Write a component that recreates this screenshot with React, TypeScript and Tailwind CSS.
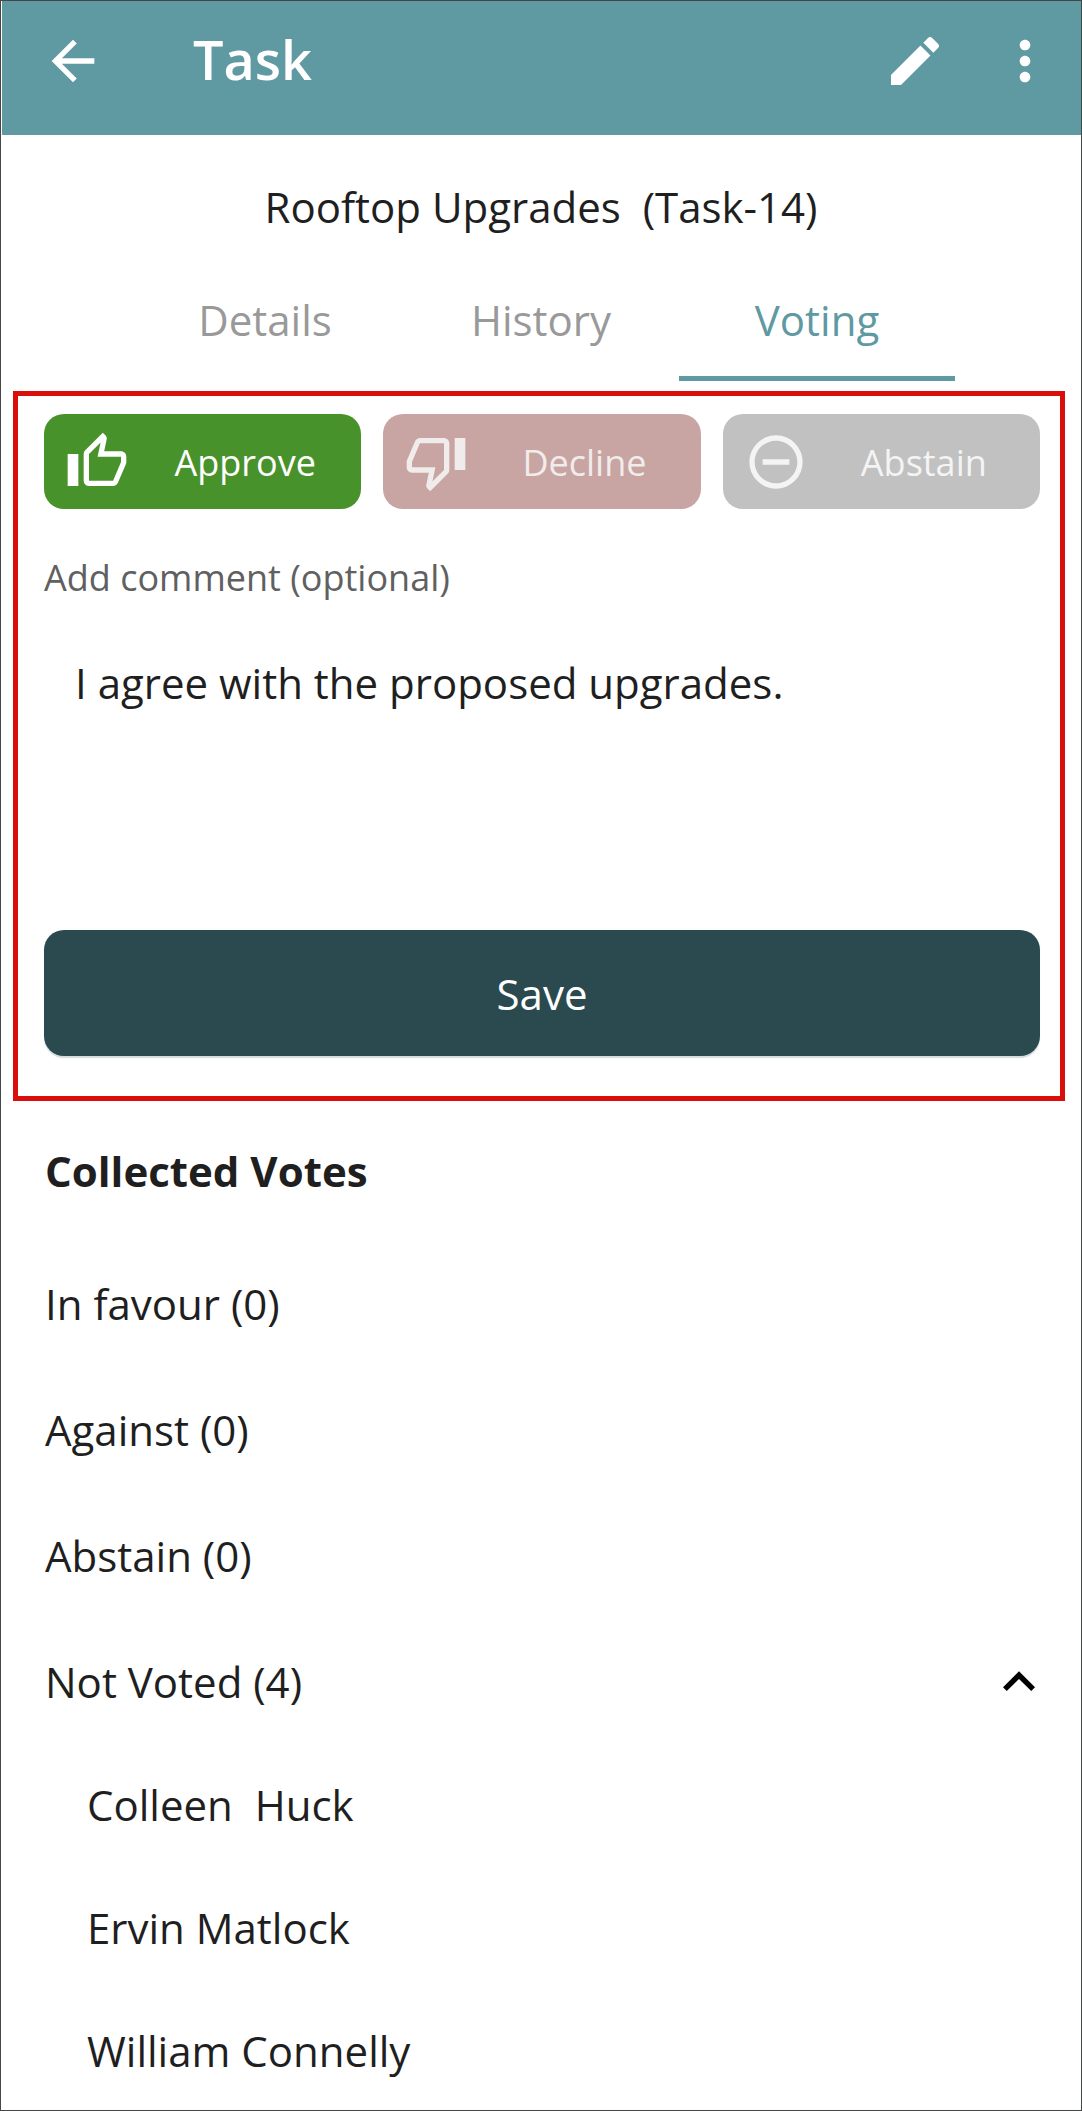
import { useState } from 'react';

const ICONS = {
  back: 'M20 11H7.83l5.59-5.59L12 4l-8 8 8 8 1.41-1.41L7.83 13H20v-2z',
  edit: 'M3 17.25V21h3.75L17.81 9.94l-3.75-3.75L3 17.25zM20.71 7.04c.39-.39.39-1.02 0-1.41l-2.34-2.34c-.39-.39-1.02-.39-1.41 0l-1.83 1.83 3.75 3.75 1.83-1.83z',
  more: 'M12 8c1.1 0 2-.9 2-2s-.9-2-2-2-2 .9-2 2 .9 2 2 2zm0 2c-1.1 0-2 .9-2 2s.9 2 2 2 2-.9 2-2-.9-2-2-2zm0 6c-1.1 0-2 .9-2 2s.9 2 2 2 2-.9 2-2-.9-2-2-2z',
  up: 'M5,9V21H1V9H5M9,21A2,2 0 0,1 7,19V9C7,8.45 7.22,7.95 7.59,7.59L14.17,1L15.23,2.06C15.5,2.33 15.67,2.7 15.67,3.11L15.64,3.43L14.69,8H21C22.11,8 23,8.9 23,10V12C23,12.26 22.95,12.5 22.86,12.73L19.84,19.78C19.54,20.5 18.83,21 18,21H9M9,19H18.03L21,12V10H12.21L13.34,4.68L9,9.03V19Z',
  down: 'M19,15V3H23V15H19M15,3A2,2 0 0,1 17,5V15C17,15.55 16.78,16.05 16.41,16.41L9.83,23L8.77,21.94C8.5,21.67 8.33,21.3 8.33,20.88L8.36,20.57L9.31,16H3C1.89,16 1,15.1 1,14V12C1,11.74 1.05,11.5 1.14,11.27L4.16,4.22C4.46,3.5 5.17,3 6,3H15M15,5H5.97L3,12V14H11.78L10.65,19.32L15,14.97V5Z',
  minus: 'M12,20C7.59,20 4,16.41 4,12C4,7.59 7.59,4 12,4C16.41,4 20,7.59 20,12C20,16.41 16.41,20 12,20M12,2A10,10 0 0,0 2,12A10,10 0 0,0 12,22A10,10 0 0,0 22,12A10,10 0 0,0 12,2M7,13H17V11H7',
  collapse: 'M12 8l-6 6 1.41 1.41L12 10.83l4.59 4.58L18 14z',
};

function Icon({ name }: { name: keyof typeof ICONS }) {
  return (
    <svg viewBox="0 0 24 24" className="size-16 shrink-0 fill-current" aria-hidden="true">
      <path d={ICONS[name]} />
    </svg>
  );
}

const TABS = ['Details', 'History', 'Voting'];

const CHOICES: { label: string; icon: keyof typeof ICONS; style: string }[] = [
  { label: 'Approve', icon: 'up', style: 'bg-[#48922b] text-white' },
  { label: 'Decline', icon: 'down', style: 'bg-[#c8a4a2] text-[#f0ecec]' },
  { label: 'Abstain', icon: 'minus', style: 'bg-[#c1c1c1] text-[#f4f4f4]' },
];

const TALLIES = ['In favour (0)', 'Against (0)', 'Abstain (0)'];
const NOT_VOTED = ['Colleen  Huck', 'Ervin Matlock', 'William Connelly'];

export default function App() {
  const [comment, setComment] = useState('I agree with the proposed upgrades.');
  const [open, setOpen] = useState(true);

  return (
    <div className="min-h-screen border border-[#444648] bg-white font-['Open_Sans',sans-serif] text-[42px] leading-[60px] text-[#1f1f1f]">
      <header className="ml-px flex items-start bg-[#5f99a2] pt-7 pr-6 pb-[42px] pl-[39px] text-white">
        <button type="button" aria-label="Back">
          <Icon name="back" />
        </button>
        <h1 className="ml-[88px] flex-1 text-[54px] leading-[60px] font-semibold">Task</h1>
        <div className="flex gap-[46px]">
          <button type="button" aria-label="Edit">
            <Icon name="edit" />
          </button>
          <button type="button" aria-label="More options">
            <Icon name="more" />
          </button>
        </div>
      </header>

      <h2 className="py-[42px] text-center font-medium whitespace-pre">Rooftop Upgrades  (Task-14)</h2>

      <nav className="mx-auto grid max-w-[828px] grid-cols-3" role="tablist">
        {TABS.map((tab) => (
          <button
            key={tab}
            type="button"
            role="tab"
            aria-selected={tab === 'Voting'}
            className={`border-b-[5px] pt-[11px] pb-[26px] font-medium ${
              tab === 'Voting' ? 'border-[#5f99a2] text-[#5f99a2]' : 'border-transparent text-[#999999]'
            }`}
          >
            {tab}
          </button>
        ))}
      </nav>

      <form
        className="mt-[10px] mr-4 ml-3 flex flex-col border-[5px] border-[#da0f0b] pt-[18px] pr-5 pb-10 pl-[26px]"
        onSubmit={(e) => e.preventDefault()}
      >
        <div className="grid grid-cols-3 gap-[22px]">
          {CHOICES.map(({ label, icon, style }) => (
            <button
              key={label}
              type="button"
              className={`flex h-[95px] items-center rounded-[20px] pl-[21px] text-[36px] ${style}`}
            >
              <Icon name={icon} />
              <span className="flex-1 pt-[3px] text-center">{label}</span>
            </button>
          ))}
        </div>

        <label htmlFor="comment" className="mt-11 text-[36px] leading-[50px] text-[#606060]">
          Add comment (optional)
        </label>
        <textarea
          id="comment"
          value={comment}
          onChange={(e) => setComment(e.target.value)}
          className="h-[327px] w-full resize-none pt-[50px] pl-[31px] outline-none"
        />

        <button
          type="submit"
          className="h-[126px] rounded-[20px] bg-[#2b4a4f] pt-[2px] text-white shadow-[0_2px_1px_rgba(43,74,79,0.2)]"
        >
          Save
        </button>
      </form>

      <section className="pr-[30px] pl-11">
        <h3 className="py-10 font-bold">Collected Votes</h3>
        {TALLIES.map((tally) => (
          <p key={tally} className="py-[33px]">
            {tally}
          </p>
        ))}
        <button
          type="button"
          aria-expanded={open}
          onClick={() => setOpen(!open)}
          className="flex h-[126px] w-full items-center justify-between text-left"
        >
          Not Voted (4)
          <span className={open ? 'text-black' : 'rotate-180 text-black'}>
            <Icon name="collapse" />
          </span>
        </button>
        {open && (
          <ul className="flex flex-col gap-[63px] pt-[30px] pb-6 pl-[42px]">
            {NOT_VOTED.map((name) => (
              <li key={name} className="whitespace-pre">
                {name}
              </li>
            ))}
          </ul>
        )}
      </section>
    </div>
  );
}
